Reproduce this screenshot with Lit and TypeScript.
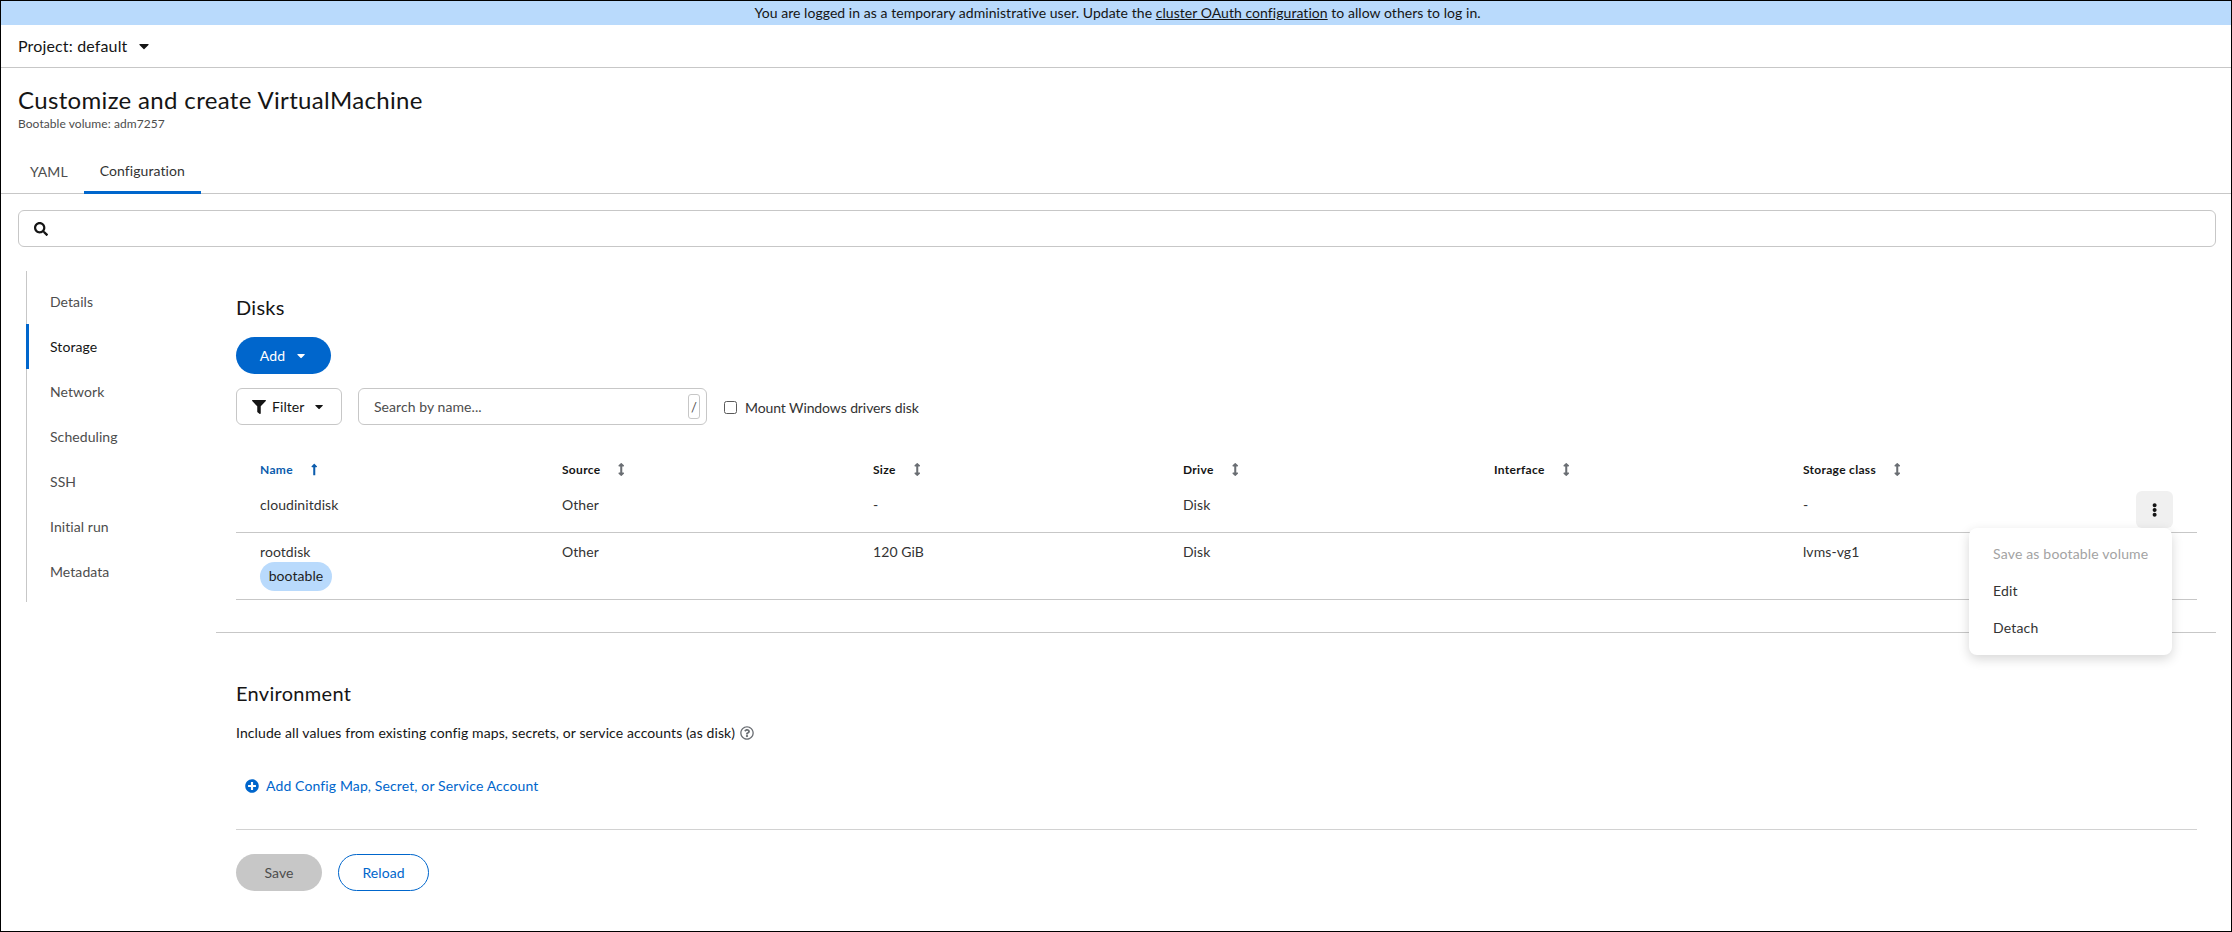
import { LitElement, html, css, svg } from "lit";
import { customElement } from "lit/decorators.js";

const P = {
  search: ["0 0 512 512", "M505 442.7L405.3 343c-4.5-4.5-10.6-7-17-7H372c27.6-35.3 44-79.7 44-128C416 93.1 322.9 0 208 0S0 93.1 0 208s93.1 208 208 208c48.3 0 92.7-16.4 128-44v16.3c0 6.4 2.5 12.5 7 17l99.7 99.7c9.4 9.4 24.6 9.4 33.9 0l28.3-28.3c9.4-9.4 9.4-24.6.1-34zM208 336c-70.7 0-128-57.2-128-128 0-70.7 57.2-128 128-128 70.7 0 128 57.2 128 128 0 70.7-57.2 128-128 128z"],
  filter: ["0 0 512 512", "M487.976 0H24.028C2.71 0-8.047 25.866 7.058 40.971L192 225.941V432c0 7.831 3.821 15.17 10.237 19.662l80 55.98C298.02 518.69 320 507.493 320 487.98V225.941l184.947-184.97C520.021 25.896 509.338 0 487.976 0z"],
  plus: ["0 0 512 512", "M256 8C119 8 8 119 8 256s111 248 248 248 248-111 248-248S393 8 256 8zm144 276c0 6.6-5.4 12-12 12h-92v92c0 6.6-5.4 12-12 12h-56c-6.6 0-12-5.4-12-12v-92h-92c-6.6 0-12-5.4-12-12v-56c0-6.6 5.4-12 12-12h92v-92c0-6.6 5.4-12 12-12h56c6.6 0 12 5.4 12 12v92h92c6.6 0 12 5.4 12 12v56z"],
  kebab: ["0 0 192 512", "M96 184c39.8 0 72 32.2 72 72s-32.2 72-72 72-72-32.2-72-72 32.2-72 72-72zM24 80c0 39.8 32.2 72 72 72s72-32.2 72-72S135.8 8 96 8 24 40.2 24 80zm0 352c0 39.8 32.2 72 72 72s72-32.2 72-72-32.2-72-72-72-72 32.2-72 72z"],
  caret: ["0 0 320 512", "M31.3 192h257.3c17.8 0 26.7 21.5 14.1 34.1L174.1 354.8c-7.8 7.8-20.5 7.8-28.3 0L17.2 226.1c-12.6-12.6-3.7-34.1 14.1-34.1z"],
  help: ["0 0 512 512", "M256 8C119.043 8 8 119.083 8 256c0 136.997 111.043 248 248 248s248-111.003 248-248C504 119.083 392.957 8 256 8zm0 448c-110.532 0-200-89.431-200-200 0-110.495 89.472-200 200-200 110.491 0 200 89.471 200 200 0 110.53-89.431 200-200 200zm107.244-255.2c0 67.052-72.421 68.084-72.421 92.863V300c0 6.627-5.373 12-12 12h-45.647c-6.627 0-12-5.373-12-12v-8.659c0-35.745 27.1-50.034 47.579-61.516 17.561-9.845 28.324-16.541 28.324-29.579 0-17.246-21.999-28.693-39.784-28.693-23.189 0-33.894 10.977-48.942 29.969-4.057 5.12-11.46 6.071-16.666 2.124l-27.824-21.098c-5.107-3.872-6.251-11.066-2.644-16.363C184.846 131.491 214.94 112 261.794 112c49.071 0 101.45 38.304 101.45 88.8zM298 368c0 23.159-18.841 42-42 42s-42-18.841-42-42 18.841-42 42-42 42 18.841 42 42z"],
  sort: ["0 0 256 512", "M214.059 377.941H168V134.059h46.059c21.382 0 32.09-25.851 16.971-40.971L144.971 7.029c-9.373-9.373-24.569-9.373-33.941 0L24.971 93.088c-15.119 15.119-4.411 40.971 16.971 40.971H88v243.882H41.941c-21.382 0-32.09 25.851-16.971 40.971l86.059 86.059c9.373 9.373 24.569 9.373 33.941 0l86.059-86.059c15.12-15.119 4.412-40.971-16.97-40.971z"],
  up: ["0 0 256 512", "M88 166.059V468c0 6.627 5.373 12 12 12h56c6.627 0 12-5.373 12-12V166.059h46.059c21.382 0 32.09-25.851 16.971-40.971l-86.059-86.059c-9.373-9.373-24.569-9.373-33.941 0l-86.059 86.059c-15.119 15.119-4.411 40.971 16.971 40.971H88z"],
};
const icon = (k: keyof typeof P, cls = "") =>
  html`<svg class="ic ${cls}" viewBox=${P[k][0]} fill="currentColor" aria-hidden="true">${svg`<path d=${P[k][1]}></path>`}</svg>`;

const NAV = ["Details", "Storage", "Network", "Scheduling", "SSH", "Initial run", "Metadata"];
const HEAD = ["Source", "Size", "Drive", "Interface", "Storage class"];

@customElement("app-root")
export class AppRoot extends LitElement {
  static styles = css`
    :host {
      display: block;
      font-family: Lato, "Noto Sans", sans-serif;
      font-size: 14px;
      letter-spacing: 0.07px;
      color: #151515;
    }
    * { box-sizing: border-box; }
    .frame {
      width: 2232px;
      height: 932px;
      border: 1px solid #000;
      background: #fff;
      overflow: hidden;
      display: flex;
      flex-direction: column;
    }
    .ic { display: block; flex: none; height: 1em; }
    .banner {
      height: 24px;
      flex: none;
      background: #b9dafc;
      display: flex;
      align-items: center;
      justify-content: center;
      line-height: 20px;
      padding-left: 3px;
      letter-spacing: 0.05px;
    }
    .banner a { color: inherit; text-decoration: underline; }
    .project {
      height: 43px;
      flex: none;
      border-bottom: 1px solid #c7c7c7;
      display: flex;
      align-items: center;
      padding: 0 0 1px 17px;
      font-size: 16px;
      letter-spacing: 0.15px;
      gap: 12px;
    }
    .project .caret { font-size: 16px; }
    .head { padding: 16px 0 0 17px; flex: none; }
    h1 { margin: 0; font-size: 24px; font-weight: 400; line-height: 32px; letter-spacing: 0.34px; }
    .sub { font-size: 12px; line-height: 16px; color: #4d4d4d; }
    .tabs {
      margin-top: 16px;
      height: 46px;
      flex: none;
      border-bottom: 1px solid #c7c7c7;
      display: flex;
      padding-left: 13px;
    }
    .tab {
      padding: 2px 16px 0;
      display: flex;
      align-items: center;
      color: #4d4d4d;
      height: 45px;
    }
    .tab.on { border-bottom: 3px solid #0066cc; height: 46px; padding-top: 3px; padding-bottom: 1px; color: #333; }
    .find {
      margin: 16px 15px 0 17px;
      height: 37px;
      flex: none;
      border: 1px solid #c7c7c7;
      border-radius: 6px;
      display: flex;
      align-items: center;
      padding-left: 15px;
      font-size: 14px;
    }
    .main { display: flex; margin-top: 24px; flex: 1; min-height: 0; }
    .nav {
      width: 190px;
      margin-left: 25px;
      flex: none;
      align-self: flex-start;
      height: 331px;
      padding: 8px 0;
      border-left: 1px solid #c7c7c7;
    }
    .nav-item {
      height: 45px;
      display: flex;
      align-items: center;
      padding: 0 0 1px 23px;
      color: #4d4d4d;
      position: relative;
    }
    .nav-item.on { color: #151515; }
    .nav-item.on::before {
      content: "";
      position: absolute;
      left: -1px;
      top: 0;
      bottom: 0;
      width: 3px;
      background: #0066cc;
    }
    .content { flex: 1; margin-right: 15px; padding-top: 25px; min-width: 0; }
    .pad { padding: 0 19px 0 20px; }
    h2 { margin: 0; font-size: 20px; font-weight: 400; line-height: 22px; padding-bottom: 2px; letter-spacing: 0.3px; }
    .btn {
      height: 37px;
      border-radius: 18.5px;
      display: inline-flex;
      align-items: center;
      justify-content: center;
    }
    .add { margin-top: 17px; width: 95px; background: #0066cc; color: #fff; gap: 12px; padding-right: 2px; }
    .add .ic, .filter .caret { font-size: 13px; }
    .toolbar { display: flex; align-items: center; margin-top: 14px; }
    .filter {
      width: 106px;
      height: 37px;
      border: 1px solid #c7c7c7;
      border-radius: 6px;
      display: flex;
      align-items: center;
      padding-left: 15px;
      color: #151515;
    }
    .filter .fn { font-size: 14px; margin-right: 6px; }
    .filter .caret { margin-left: 11px; }
    .search {
      width: 349px;
      height: 37px;
      margin-left: 16px;
      border: 1px solid #c7c7c7;
      border-radius: 6px;
      display: flex;
      align-items: center;
      justify-content: space-between;
      padding: 0 6px 0 15px;
      color: #4d4d4d;
    }
    .kbd {
      width: 12px;
      height: 25px;
      border: 1px solid #c7c7c7;
      border-radius: 3px;
      display: flex;
      align-items: center;
      justify-content: center;
      color: #4d4d4d;
      font-size: 13px;
    }
    .check { display: flex; align-items: center; margin-left: 17px; padding-top: 2px; letter-spacing: -0.1px; color: #333; }
    .box {
      width: 13px;
      height: 13px;
      border: 1px solid #5a5a5a;
      border-radius: 2.5px;
      margin-right: 8px;
    }
    .table { margin-top: 22px; position: relative; }
    .row {
      display: grid;
      grid-template-columns: 302px 311px 310px 311px 309px 1fr;
      padding-left: 24px;
    }
    .hrow { height: 46px; align-items: center; font-size: 12px; font-weight: 700; letter-spacing: 0.3px; padding-bottom: 1px; }
    .th { display: flex; align-items: center; }
    .th .ic { font-size: 13px; color: #6a6e73; }
    .th.name { color: #0b5cad; }
    .th.name .ic { color: #0b5cad; }
    .th span { margin-right: 18px; }
    .drow { border-bottom: 1px solid #c7c7c7; color: #333; line-height: 21px; }
    .r1 { height: 40px; padding-top: 1px; }
    .r2 { height: 67px; padding-top: 8px; }
    .label {
      display: inline-flex;
      align-items: center;
      height: 29px;
      width: 72px;
      justify-content: center;
      border-radius: 15px;
      background: #b9dafc;
      color: #1f1f1f;
      padding-bottom: 2px;
    }
    .kebab {
      position: absolute;
      left: 1900px;
      top: 44px;
      width: 37px;
      height: 37px;
      border-radius: 6px;
      background: #f0f0f0;
      display: flex;
      align-items: center;
      justify-content: center;
      font-size: 14px;
    }
    .menu {
      position: absolute;
      left: 1733px;
      top: 81px;
      width: 203px;
      height: 127px;
      background: #fff;
      border-radius: 8px;
      box-shadow: 0 4px 12px rgba(3, 3, 3, 0.16);
      padding: 8px 0;
      z-index: 2;
      letter-spacing: 0.18px;
      color: #333;
    }
    .mi { height: 37px; display: flex; align-items: center; padding: 0 0 2px 24px; }
    .mi.dis { color: #a3a3a3; }
    .rule { height: 1px; background: #c7c7c7; margin-top: 32px; }
    .env { margin-top: 49px; }
    .para { margin-top: 17px; line-height: 20px; display: flex; align-items: center; gap: 5px; letter-spacing: 0.1px; }
    .para .ic { color: #6a6e73; font-size: 14px; }
    .link {
      margin-top: 31px;
      height: 24px;
      padding: 0 0 1px 9px;
      display: flex;
      align-items: center;
      gap: 7px;
      color: #0066cc;
      letter-spacing: 0.12px;
    }
    .link .ic { font-size: 14px; }
    .rule2 { height: 1px; background: #d2d2d2; margin-top: 31px; }
    .actions { margin-top: 24px; display: flex; gap: 16px; }
    .save { width: 86px; background: #c7c7c7; color: #4d4d4d; }
    .reload { width: 91px; border: 1px solid #0066cc; color: #0066cc; }
  `;

  render() {
    return html`
      <div class="frame">
        <div class="banner">
          <span>You are logged in as a temporary administrative user. Update the <a>cluster OAuth configuration</a> to allow others to log in.</span>
        </div>
        <div class="project"><span>Project: default</span>${icon("caret", "caret")}</div>
        <div class="head">
          <h1>Customize and create VirtualMachine</h1>
          <div class="sub">Bootable volume: adm7257</div>
        </div>
        <div class="tabs">
          <div class="tab">YAML</div>
          <div class="tab on">Configuration</div>
        </div>
        <div class="find">${icon("search")}</div>
        <div class="main">
          <div class="nav">
            ${NAV.map((n) => html`<div class="nav-item ${n === "Storage" ? "on" : ""}">${n}</div>`)}
          </div>
          <div class="content">
            <div class="pad">
              <h2>Disks</h2>
              <div class="btn add"><span>Add</span>${icon("caret")}</div>
              <div class="toolbar">
                <div class="filter">${icon("filter", "fn")}<span>Filter</span>${icon("caret", "caret")}</div>
                <div class="search"><span>Search by name...</span><span class="kbd">/</span></div>
                <div class="check"><span class="box"></span><span>Mount Windows drivers disk</span></div>
              </div>
              <div class="table">
                <div class="row hrow">
                  <div class="th name"><span>Name</span>${icon("up")}</div>
                  ${HEAD.map((h) => html`<div class="th"><span>${h}</span>${icon("sort")}</div>`)}
                </div>
                <div class="row drow r1">
                  <div>cloudinitdisk</div><div>Other</div><div>-</div><div>Disk</div><div></div><div>-</div>
                </div>
                <div class="row drow r2">
                  <div>rootdisk<br /><span class="label">bootable</span></div><div>Other</div><div>120 GiB</div><div>Disk</div><div></div><div>lvms-vg1</div>
                </div>
                <div class="kebab">${icon("kebab")}</div>
                <div class="menu">
                  <div class="mi dis">Save as bootable volume</div>
                  <div class="mi">Edit</div>
                  <div class="mi">Detach</div>
                </div>
              </div>
            </div>
            <div class="rule"></div>
            <div class="pad">
              <h2 class="env">Environment</h2>
              <div class="para"><span>Include all values from existing config maps, secrets, or service accounts (as disk)</span>${icon("help")}</div>
              <div class="link">${icon("plus")}<span>Add Config Map, Secret, or Service Account</span></div>
              <div class="rule2"></div>
              <div class="actions">
                <div class="btn save">Save</div>
                <div class="btn reload">Reload</div>
              </div>
            </div>
          </div>
        </div>
      </div>
    `;
  }
}
